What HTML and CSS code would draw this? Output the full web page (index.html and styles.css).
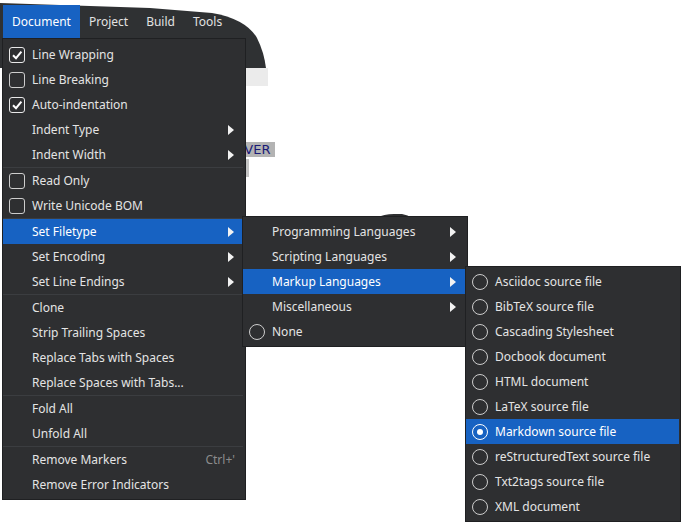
FILE: index.html
```html
<!DOCTYPE html>
<html>
<head>
<meta charset="utf-8">
<link rel="stylesheet" href="styles.css">
</head>
<body>
<div class="scene">
  <svg class="backdrop" width="682" height="525" viewBox="0 0 682 525">
    <path d="M0,3 L150,8 L212,13 Q246,19 257,38 Q264,52 266,68 L0,68 Z" fill="#2f3133"/>
    <rect x="246" y="68" width="22" height="18" fill="#ebebeb"/>
    <rect x="245" y="159" width="4" height="18" fill="#c4c4c4"/>
    <path d="M376,218 Q384,214 394,214 L402,214 Q408,215 412,218 Z" fill="#2e2f31"/>
  </svg>
  <div class="doc-text"><span class="sel">RVER</span></div>

  <nav class="menubar">
    <div class="mb-item active">Document</div>
    <div class="mb-item">Project</div>
    <div class="mb-item">Build</div>
    <div class="mb-item">Tools</div>
  </nav>

  <div class="menu main-menu">
    <div class="row"><span class="ind"><span class="check on"><svg width="14" height="14" viewBox="0 0 14 14"><path d="M3 7.2 L6 10.2 L11.4 3.6" fill="none" stroke="#fff" stroke-width="2"/></svg></span></span><span class="label">Line Wrapping</span></div>
    <div class="row"><span class="ind"><span class="check"></span></span><span class="label">Line Breaking</span></div>
    <div class="row"><span class="ind"><span class="check on"><svg width="14" height="14" viewBox="0 0 14 14"><path d="M3 7.2 L6 10.2 L11.4 3.6" fill="none" stroke="#fff" stroke-width="2"/></svg></span></span><span class="label">Auto-indentation</span></div>
    <div class="row"><span class="ind"></span><span class="label">Indent Type</span><span class="arrow"></span></div>
    <div class="row"><span class="ind"></span><span class="label">Indent Width</span><span class="arrow"></span></div>
    <div class="sep"></div>
    <div class="row"><span class="ind"><span class="check"></span></span><span class="label">Read Only</span></div>
    <div class="row"><span class="ind"><span class="check"></span></span><span class="label">Write Unicode BOM</span></div>
    <div class="sep"></div>
    <div class="row hl"><span class="ind"></span><span class="label">Set Filetype</span><span class="arrow"></span></div>
    <div class="row"><span class="ind"></span><span class="label">Set Encoding</span><span class="arrow"></span></div>
    <div class="row"><span class="ind"></span><span class="label">Set Line Endings</span><span class="arrow"></span></div>
    <div class="sep"></div>
    <div class="row"><span class="ind"></span><span class="label">Clone</span></div>
    <div class="row"><span class="ind"></span><span class="label">Strip Trailing Spaces</span></div>
    <div class="row"><span class="ind"></span><span class="label">Replace Tabs with Spaces</span></div>
    <div class="row"><span class="ind"></span><span class="label">Replace Spaces with Tabs...</span></div>
    <div class="sep"></div>
    <div class="row"><span class="ind"></span><span class="label">Fold All</span></div>
    <div class="row"><span class="ind"></span><span class="label">Unfold All</span></div>
    <div class="sep"></div>
    <div class="row"><span class="ind"></span><span class="label">Remove Markers</span><span class="shortcut">Ctrl+'</span></div>
    <div class="row"><span class="ind"></span><span class="label">Remove Error Indicators</span></div>
  </div>

  <div class="menu sub-menu">
    <div class="row"><span class="ind"></span><span class="label">Programming Languages</span><span class="arrow"></span></div>
    <div class="row"><span class="ind"></span><span class="label">Scripting Languages</span><span class="arrow"></span></div>
    <div class="row hl"><span class="ind"></span><span class="label">Markup Languages</span><span class="arrow"></span></div>
    <div class="row"><span class="ind"></span><span class="label">Miscellaneous</span><span class="arrow"></span></div>
    <div class="row"><span class="ind"><span class="radio"></span></span><span class="label">None</span></div>
  </div>

  <div class="menu types-menu">
    <div class="row"><span class="ind"><span class="radio"></span></span><span class="label">Asciidoc source file</span></div>
    <div class="row"><span class="ind"><span class="radio"></span></span><span class="label">BibTeX source file</span></div>
    <div class="row"><span class="ind"><span class="radio"></span></span><span class="label">Cascading Stylesheet</span></div>
    <div class="row"><span class="ind"><span class="radio"></span></span><span class="label">Docbook document</span></div>
    <div class="row"><span class="ind"><span class="radio"></span></span><span class="label">HTML document</span></div>
    <div class="row"><span class="ind"><span class="radio"></span></span><span class="label">LaTeX source file</span></div>
    <div class="row hl"><span class="ind"><span class="radio on"></span></span><span class="label">Markdown source file</span></div>
    <div class="row"><span class="ind"><span class="radio"></span></span><span class="label">reStructuredText source file</span></div>
    <div class="row"><span class="ind"><span class="radio"></span></span><span class="label">Txt2tags source file</span></div>
    <div class="row"><span class="ind"><span class="radio"></span></span><span class="label">XML document</span></div>
  </div>
</div>
</body>
</html>
```
FILE: styles.css
```css
* { box-sizing: border-box; }
html, body { margin: 0; padding: 0; background: #ffffff; }
body { font-family: "Noto Sans", "DejaVu Sans", sans-serif; font-size: 12px; color: #e4e4e4; }

.scene { position: relative; width: 682px; height: 525px; overflow: hidden; background: #fff; }

.backdrop { position: absolute; left: 0; top: 0; }

.doc-text {
  position: absolute; left: 236px; top: 141px;
  font-family: "DejaVu Sans", sans-serif; font-size: 13px; line-height: 18px;
  color: #1a1a78;
}
.doc-text .sel { background: #b3b3b3; padding-right: 5px; }

.menubar {
  position: relative; display: flex; margin-left: 3px; padding-top: 5px; height: 38px;
}
.mb-item { padding: 0 9px; line-height: 33px; height: 33px; color: #e2e2e2; font-size: 12px; }
.mb-item.active { background: #1762c2; color: #fff; }

.menu {
  position: absolute; background: #2e2f31; border: 1px solid #1f2022;
}
.main-menu { left: 2px; top: 38px; width: 244px; padding: 3px 2px 2px 0; }
.sub-menu { left: 242px; top: 216px; width: 226px; padding: 2px 1px 2px 0; }
.types-menu { left: 465px; top: 266px; width: 216px; padding: 2px 1px 2px 0; }

.row {
  display: flex; align-items: center; height: 25px; padding: 0 8px 0 6px; white-space: nowrap;
}
.row.hl { background: #1762c2; color: #fff; }
.ind { width: 16px; height: 16px; margin-right: 7px; flex: none; display: flex; }
.label { flex: 1; }
.shortcut { color: #8c8c8c; }

.arrow {
  width: 0; height: 0; border-top: 5px solid transparent; border-bottom: 5px solid transparent;
  border-left: 6px solid #f2f2f2; margin-right: 1px;
}
.sub-menu .arrow { margin-right: 2px; }

.sep { height: 1px; background: #3b3d40; }

.check {
  width: 16px; height: 16px; border: 1px solid #cdcdcd; border-radius: 3px;
  display: flex; align-items: center; justify-content: center;
}
.check.on { border-color: #e8e8e8; }

.radio {
  width: 16px; height: 16px; border: 1.3px solid #cdcdcd; border-radius: 50%;
  display: flex; align-items: center; justify-content: center;
}
.radio.on { border-color: #fff; }
.radio.on::after { content: ""; width: 6px; height: 6px; border-radius: 50%; background: #fff; }
```
